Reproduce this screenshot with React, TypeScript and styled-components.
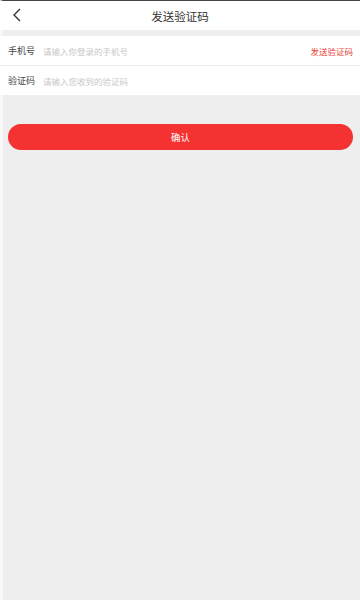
import React from 'react'
import styled, { createGlobalStyle } from 'styled-components'

const GlobalStyle = createGlobalStyle`
  html, body {
    margin: 0;
    padding: 0;
    background: #eeeeee;
    font-family: "Noto Sans CJK SC", "Noto Sans", sans-serif;
  }
`

const Page = styled.div`
  width: 360px;
  height: 600px;
  box-sizing: border-box;
  border-top: 1px solid #444;
  border-left: 3px solid #f8f8f8;
  background: #eeeeee;
  display: flex;
  flex-direction: column;
`

const Header = styled.div`
  height: 29px;
  margin-left: -3px;
  background: #fff;
  display: flex;
  align-items: center;
  justify-content: center;
  position: relative;
`

const Back = styled.button`
  position: absolute;
  left: 7px;
  top: 4px;
  width: 20px;
  height: 20px;
  padding: 0;
  border: none;
  background: none;
  display: flex;
  align-items: center;
  justify-content: center;
`

const Title = styled.h1`
  margin: 0;
  font-size: 11.5px;
  font-weight: 400;
  color: #333;
`

const Form = styled.div`
  margin: 6px 0 0 -3px;
  background: #fff;
  display: flex;
  flex-direction: column;
`

const Row = styled.div<{ divider?: boolean }>`
  height: 29px;
  padding: 0 7px 0 8px;
  display: flex;
  align-items: center;
  border-bottom: ${(p) => (p.divider ? '1px solid #eeeeee' : 'none')};
`

const Label = styled.span`
  width: 35px;
  font-size: 9px;
  color: #444;
`

const Input = styled.input`
  flex: 1;
  border: none;
  outline: none;
  padding: 0;
  background: transparent;
  font-family: inherit;
  font-size: 8.5px;
  color: #333;
  &::placeholder {
    color: #c8c8c8;
  }
`

const SendCode = styled.span`
  font-size: 8.5px;
  color: #e8403a;
`

const Confirm = styled.button`
  margin: 29px 7px 0 5px;
  height: 26px;
  border: none;
  border-radius: 13px;
  background: #f53232;
  color: #fff;
  font-family: inherit;
  font-size: 9.5px;
`

const App = () => {
  return (
    <>
      <GlobalStyle />
      <Page>
        <Header>
          <Back>
            <svg width="10" height="14" viewBox="0 0 10 14">
              <path d="M8 1 L2 7 L8 13" fill="none" stroke="#333" strokeWidth="1.4" />
            </svg>
          </Back>
          <Title>发送验证码</Title>
        </Header>
        <Form>
          <Row divider>
            <Label>手机号</Label>
            <Input placeholder="请输入你登录的手机号" />
            <SendCode>发送验证码</SendCode>
          </Row>
          <Row>
            <Label>验证码</Label>
            <Input placeholder="请输入您收到的验证码" />
          </Row>
        </Form>
        <Confirm>确认</Confirm>
      </Page>
    </>
  )
}

export default App
